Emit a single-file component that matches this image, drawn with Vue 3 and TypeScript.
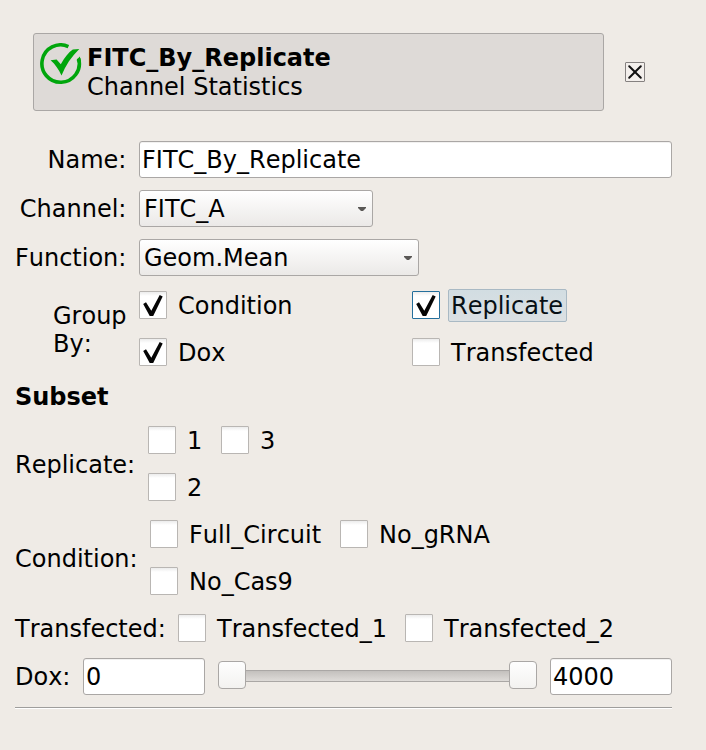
<script setup lang="ts">
import { reactive, ref } from 'vue'

interface Option {
  label: string
  checked: boolean
  focused?: boolean
}
interface Subset {
  key: string
  label: string
  options: Option[]
}

const name = ref('FITC_By_Replicate')
const selects = [
  { key: 'channel', label: 'Channel:', value: 'FITC_A' },
  { key: 'function', label: 'Function:', value: 'Geom.Mean' },
]
const groupBy = reactive<Option[]>([
  { label: 'Condition', checked: true },
  { label: 'Replicate', checked: true, focused: true },
  { label: 'Dox', checked: true },
  { label: 'Transfected', checked: false },
])
const subsets = reactive<Subset[]>([
  {
    key: 'replicate',
    label: 'Replicate:',
    options: [
      { label: '1', checked: false },
      { label: '3', checked: false },
      { label: '2', checked: false },
    ],
  },
  {
    key: 'condition',
    label: 'Condition:',
    options: [
      { label: 'Full_Circuit', checked: false },
      { label: 'No_gRNA', checked: false },
      { label: 'No_Cas9', checked: false },
    ],
  },
  {
    key: 'transfected',
    label: 'Transfected:',
    options: [
      { label: 'Transfected_1', checked: false },
      { label: 'Transfected_2', checked: false },
    ],
  },
])
const doxMin = ref('0')
const doxMax = ref('4000')
const checkPath = 'M3.200 12L6 10.200L11.300 18.800L19.700 3L22.700 4.500L13.200 24H9.700Z'
</script>

<template>
  <main class="panel">
    <header class="header">
      <div class="title-card">
        <svg class="status" viewBox="0 0 42 42" width="42" height="42">
          <path d="M28.4 3.600A18.700 18.700 0 1 0 38.600 15.500" fill="none" stroke="#00a60c" stroke-width="3.600" />
          <path d="M36.600 17L39.800 13.600L41 18L38 20Z" fill="#00a60c" />
          <path d="M10.600 17.300L16.600 16.600L20.800 21.200C24.500 14.500 28.500 9.500 32.800 6.600L39.300 6C31.500 13.500 25.500 22.500 21.500 32.400C18.500 26.500 15.500 21.500 10.600 17.300Z" fill="#00a60c" />
        </svg>
        <div class="titles">
          <div class="title">FITC_By_Replicate</div>
          <div>Channel Statistics</div>
        </div>
      </div>
      <button class="close" aria-label="Close">
        <svg viewBox="0 0 18 18" width="18" height="18">
          <path d="M3.200 3.200L14.800 14.800M14.800 3.200L3.200 14.800" stroke="#111" stroke-width="2" stroke-linecap="round" />
        </svg>
      </button>
    </header>

    <section class="form">
      <label class="caption" for="name">Name:</label>
      <input id="name" v-model="name" class="field" />
      <template v-for="s in selects" :key="s.key">
        <span class="caption">{{ s.label }}</span>
        <button class="select" :class="s.key">
          <span>{{ s.value }}</span>
          <svg viewBox="0 0 8 4" width="8" height="4"><path d="M0 0H8V1L5 4H3L0 1Z" fill="#5a5856" /></svg>
        </button>
      </template>
    </section>

    <section class="group">
      <div class="group-caption">Group By:</div>
      <div class="options">
        <div
          v-for="o in groupBy"
          :key="o.label"
          class="option"
          :class="{ focused: o.focused }"
          @click="o.checked = !o.checked"
        >
          <span class="box">
            <svg v-if="o.checked" viewBox="0 0 26 26" width="26" height="26">
              <path :d="checkPath" fill="#050505" />
            </svg>
          </span>
          <span class="text">{{ o.label }}</span>
        </div>
      </div>
    </section>

    <h2 class="heading">Subset</h2>

    <section v-for="s in subsets" :key="s.key" class="subset" :class="s.key">
      <span class="subset-caption">{{ s.label }}</span>
      <div class="options">
        <div v-for="o in s.options" :key="o.label" class="option" @click="o.checked = !o.checked">
          <span class="box">
            <svg v-if="o.checked" viewBox="0 0 26 26" width="26" height="26">
              <path :d="checkPath" fill="#050505" />
            </svg>
          </span>
          <span class="text">{{ o.label }}</span>
        </div>
      </div>
    </section>

    <section class="range">
      <span class="range-caption">Dox:</span>
      <input v-model="doxMin" class="field bound" aria-label="Minimum" />
      <div class="slider">
        <span class="handle"></span>
        <span class="groove"></span>
        <span class="handle"></span>
      </div>
      <input v-model="doxMax" class="field bound" aria-label="Maximum" />
    </section>
    <hr class="rule" />
  </main>
</template>

<style>
body {
  margin: 0;
  background: #efebe6;
}
</style>

<style scoped>
* {
  box-sizing: border-box;
}
.panel {
  width: 706px;
  height: 750px;
  padding: 33px 34px 0 15px;
  background: #efebe6;
  color: #000;
  font: 24px/28px 'DejaVu Sans', sans-serif;
  font-kerning: none;
  white-space: nowrap;
  overflow: hidden;
}
.header {
  display: flex;
  align-items: center;
  gap: 21px;
  margin-left: 18px;
}
.title-card {
  display: flex;
  width: 571px;
  height: 78px;
  padding: 9px 6px;
  gap: 5px;
  border: 1px solid #aaa7a5;
  border-radius: 3px;
  background: #dedad7;
}
.status {
  flex: none;
}
.titles {
  padding-top: 1px;
  line-height: 29px;
}
.title {
  font-weight: bold;
}
.close {
  display: flex;
  width: 20px;
  height: 20px;
  padding: 0;
  border: 1px solid #858180;
  border-radius: 1px;
  background: #f3efec;
}
.form {
  display: grid;
  grid-template-columns: 112px 533px;
  column-gap: 12px;
  row-gap: 12px;
  margin-top: 30px;
}
.caption {
  display: flex;
  align-items: center;
  justify-content: flex-end;
  padding-right: 0.6px;
}
.field {
  height: 37px;
  padding: 0 2px;
  border: 1px solid #aaa7a5;
  border-radius: 3px;
  outline: none;
  background: #fff;
  box-shadow: inset 0 1px #f2f1f0;
  color: #000;
  font: inherit;
  font-kerning: none;
}
.select {
  display: flex;
  align-items: center;
  justify-content: space-between;
  height: 37px;
  padding: 0 6px 0 4px;
  border: 1px solid #aaa7a5;
  border-radius: 3px;
  background: linear-gradient(#fff, #ebe9e7);
  color: #000;
  font: inherit;
  font-kerning: none;
}
.channel {
  width: 234px;
}
.function {
  width: 280px;
}
.group {
  display: flex;
  align-items: center;
  margin-top: 15px;
  padding-left: 38px;
}
.group-caption {
  width: 86px;
  padding-top: 2px;
  white-space: normal;
}
.options {
  display: grid;
  row-gap: 19px;
}
.group .options {
  grid-template-columns: 273px auto;
}
.option {
  display: flex;
  align-items: center;
  height: 28px;
}
.box {
  display: flex;
  flex: none;
  width: 28px;
  height: 28px;
  border: 1px solid #b9b6b3;
  border-radius: 1px;
  background: linear-gradient(#ececec, #fff 4px);
}
.text {
  margin-left: 8px;
  padding: 3px 3px 2px 2px;
  border: 1px solid transparent;
  border-radius: 2px;
}
.focused .box {
  border-color: #246f9c;
}
.focused .text {
  width: 119px;
  height: 33px;
  padding-top: 2px;
  border-color: #a9b9c4;
  background: linear-gradient(#d2dde2, #dbe0e3);
  color: #071015;
}
.heading {
  margin: 17px 0 15px;
  font-size: 24px;
  font-weight: bold;
  line-height: 28px;
}
.subset {
  display: flex;
  align-items: center;
  margin-bottom: 19px;
}
.subset-caption {
  padding-top: 2px;
}
.replicate .subset-caption {
  width: 133px;
}
.replicate .options {
  grid-template-columns: 73px auto;
}
.condition .subset-caption {
  width: 135px;
}
.condition .options {
  grid-template-columns: 190px auto;
}
.transfected {
  height: 28px;
  margin-bottom: 16px;
}
.transfected .subset-caption {
  width: 163px;
}
.transfected .options {
  grid-template-columns: 227px auto;
}
.range {
  display: flex;
  align-items: center;
}
.range-caption {
  width: 68px;
}
.bound {
  width: 122px;
}
.slider {
  display: flex;
  align-items: center;
  width: 319px;
  height: 28px;
  margin: -3px 13px 0;
}
.handle {
  width: 28px;
  height: 28px;
  border: 1px solid #aaa7a5;
  border-radius: 4px;
  background: linear-gradient(#fefefe, #f3f2f0);
}
.groove {
  flex: 1;
  height: 12px;
  margin-top: 2px;
  border: solid #aaa7a5;
  border-width: 1px 0;
  background: linear-gradient(#c3c0bd, #dedbd8);
}
.rule {
  height: 2px;
  margin: 12px 0 0;
  border: 0;
  border-top: 1px solid #9f9e9c;
  background: #fff;
}
</style>
